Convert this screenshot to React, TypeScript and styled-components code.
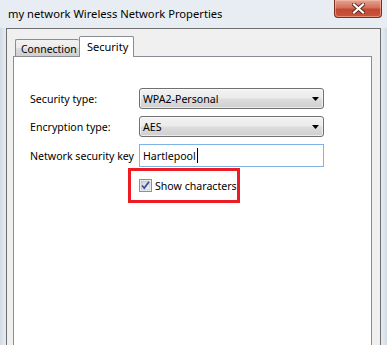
import React from "react";
import styled, { createGlobalStyle } from "styled-components";

const Global = createGlobalStyle`
  html, body { margin: 0; padding: 0; }
  body {
    width: 387px;
    height: 345px;
    overflow: hidden;
    background: #e6ecf2;
    font-family: "Noto Sans", "Open Sans", "DejaVu Sans", sans-serif;
    font-size: 10.6px;
    color: #000;
  }
`;

const Window = styled.div`
  width: 387px;
  height: 345px;
  display: flex;
  flex-direction: column;
  background: linear-gradient(to right, #d2dae3 0px, #dde4ec 3px, #e7ecf2 6px, #e7ecf2 381px, #dde4ec 384px, #d2dae3 387px);
  overflow: hidden;
`;

const TitleBar = styled.div`
  height: 28px;
  flex: none;
  display: flex;
  justify-content: space-between;
  align-items: flex-start;
  background: #e8edf3;
`;

const Title = styled.div`
  padding-left: 8px;
  padding-top: 6px;
  font-size: 11.2px;
  line-height: 16px;
  white-space: nowrap;
`;

const CloseButton = styled.div`
  width: 46px;
  height: 17px;
  margin-right: 5px;
  border: 1px solid #7a2e22;
  border-top: none;
  border-radius: 0 0 4px 4px;
  background: linear-gradient(to bottom, #e3a593 0%, #d4705a 45%, #c24a33 55%, #c8553b 100%);
  display: flex;
  align-items: center;
  justify-content: center;
  box-shadow: inset 0 0 0 1px rgba(255, 200, 180, 0.5);
`;

const Client = styled.div`
  flex: 1;
  margin: 0 6px;
  border: 1px solid #6e6e6e;
  border-bottom: none;
  background: #f0f0f0;
  display: flex;
  flex-direction: column;
  padding: 7px 8px 0 6px;
`;

const TabStrip = styled.div`
  height: 20px;
  display: flex;
  align-items: flex-end;
  padding-left: 2px;
`;

const Tab = styled.div<{ $active?: boolean }>`
  box-sizing: border-box;
  border: 1px solid #898c95;
  border-bottom: none;
  border-radius: 2px 2px 0 0;
  white-space: nowrap;
  display: flex;
  align-items: center;
  ${(p) =>
    p.$active
      ? `
    width: 55px;
    height: 21px;
    margin-bottom: -1px;
    position: relative;
    z-index: 1;
    background: #fff;
    padding: 0 0 2px 7px;
    font-size: 11px;
  `
      : `
    width: 64px;
    height: 17px;
    border-right: none;
    background: linear-gradient(to bottom, #f2f2f2 0%, #ebebeb 50%, #dddddd 51%, #cfcfcf 100%);
    padding: 1px 0 0 5px;
    font-size: 10.4px;
  `}
`;

const Panel = styled.div`
  flex: 1;
  background: #fff;
  border: 1px solid #898c95;
  border-bottom: none;
  padding: 31px 0 0 16px;
`;

const Form = styled.div`
  display: grid;
  grid-template-columns: 109px 185px;
  row-gap: 7px;
  align-items: center;
`;

const Label = styled.div`
  white-space: nowrap;
  line-height: 16px;
`;

const Combo = styled.div`
  box-sizing: border-box;
  height: 21px;
  border: 1px solid #707070;
  border-radius: 3px;
  background: linear-gradient(to bottom, #f2f2f2 0%, #ebebeb 48%, #dddddd 52%, #cfcfcf 100%);
  display: flex;
  align-items: center;
  justify-content: space-between;
  padding: 0 4px 0 3px;
  box-shadow: inset 0 0 0 1px rgba(255, 255, 255, 0.6);
`;

const TextBox = styled.div`
  box-sizing: border-box;
  height: 23px;
  border: 1px solid #7eb4ea;
  background: #fff;
  display: flex;
  align-items: center;
  padding-left: 3px;
`;

const Caret = styled.span`
  display: inline-block;
  width: 1px;
  height: 15px;
  background: #000;
  margin-left: 1px;
`;

const Highlight = styled.div`
  box-sizing: border-box;
  margin: 1px 0 0 98px;
  width: 112px;
  height: 35px;
  border: 3px solid #ed1c24;
  display: flex;
  align-items: center;
  padding-left: 8px;
  gap: 3px;
`;

const CheckLabel = styled.span`
  white-space: nowrap;
  line-height: 16px;
`;

const Icon = styled.svg`
  flex: none;
  display: block;
`;

const Arrow = () => (
  <Icon width="7" height="4" viewBox="0 0 7 4">
    <path d="M0 0H7L3.5 4Z" fill="#000" />
  </Icon>
);

const CloseGlyph = () => (
  <Icon width="13" height="11" viewBox="0 0 13 11">
    <path d="M2 1.5L11 9.5M11 1.5L2 9.5" stroke="#5a2a22" strokeWidth="4" strokeLinecap="square" />
    <path d="M2 1.5L11 9.5M11 1.5L2 9.5" stroke="#ffffff" strokeWidth="2.2" strokeLinecap="square" />
  </Icon>
);

const CheckBox = () => (
  <Icon width="13" height="13" viewBox="0 0 13 13">
    <defs>
      <linearGradient id="cbg" x1="0" y1="0" x2="1" y2="1">
        <stop offset="0" stopColor="#cbcfd5" />
        <stop offset="1" stopColor="#f6f6f6" />
      </linearGradient>
    </defs>
    <rect x="0.5" y="0.5" width="12" height="12" fill="#fff" stroke="#8e8f8f" />
    <rect x="2" y="2" width="9" height="9" fill="url(#cbg)" stroke="#b0b3b8" strokeWidth="0.6" />
    <path d="M3 6.5L5.3 9L10 2.8" fill="none" stroke="#3c5298" strokeWidth="1.8" />
  </Icon>
);

export default function App() {
  return (
    <>
      <Global />
      <Window>
        <TitleBar>
          <Title>my network Wireless Network Properties</Title>
          <CloseButton>
            <CloseGlyph />
          </CloseButton>
        </TitleBar>
        <Client>
          <TabStrip>
            <Tab>Connection</Tab>
            <Tab $active>Security</Tab>
          </TabStrip>
          <Panel>
            <Form>
              <Label>Security type:</Label>
              <Combo>
                <span>WPA2-Personal</span>
                <Arrow />
              </Combo>
              <Label>Encryption type:</Label>
              <Combo>
                <span>AES</span>
                <Arrow />
              </Combo>
              <Label>Network security key</Label>
              <TextBox>
                Hartlepool
                <Caret />
              </TextBox>
            </Form>
            <Highlight>
              <CheckBox />
              <CheckLabel>Show characters</CheckLabel>
            </Highlight>
          </Panel>
        </Client>
      </Window>
    </>
  );
}
